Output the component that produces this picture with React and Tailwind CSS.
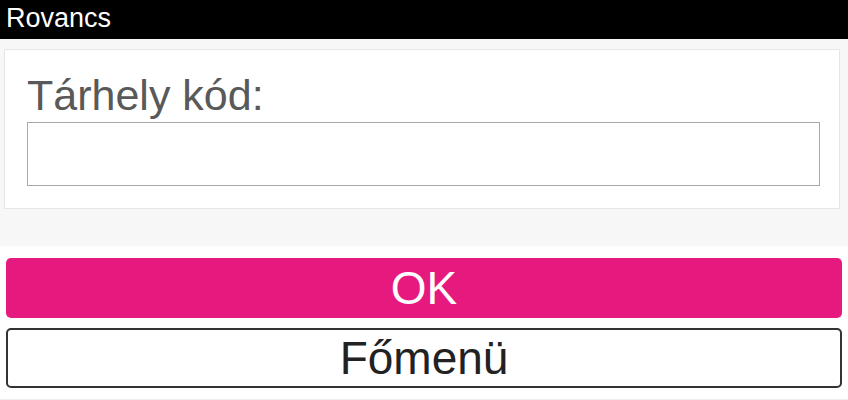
export default function App() {
  return (
    <div className="min-h-screen bg-white font-['Liberation_Sans',Arial,sans-serif]">
      {/* Header */}
      <header className="h-[39px] bg-black px-[6px] text-[27px] leading-[36px] text-white">
        Rovancs
      </header>

      {/* Form panel */}
      <div className="bg-[#f7f7f7] pt-[10px] pb-[37px] pl-[4px] pr-[8px]">
        <div className="border border-[#e6e6e6] bg-white pt-[21px] pb-[22px] pl-[22px] pr-[19px]">
          <label className="block text-[43px] leading-[48px] text-[#595959]">Tárhely kód:</label>
          <input
            type="text"
            className="mt-[3px] block h-[64px] w-full border border-[#a9a9a9] bg-white px-2 text-[28px] outline-none"
          />
        </div>
      </div>

      {/* Buttons */}
      <div className="flex flex-col gap-[10px] px-[6px] pt-[12px]">
        <button className="flex h-[60px] items-center justify-center rounded-[5px] bg-[#e6197e] text-[46px] text-white">
          OK
        </button>
        <button className="flex h-[60px] items-center justify-center rounded-[5px] border-2 border-[#333333] bg-white text-[46px] text-[#222222]">
          Főmenü
        </button>
      </div>
      <div className="mt-[11px] border-t border-[#eeeeee]" />
    </div>
  );
}
